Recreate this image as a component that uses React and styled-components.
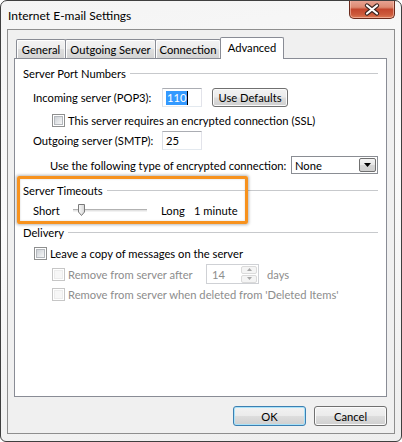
import React from 'react';
import styled, { createGlobalStyle, css } from 'styled-components';

const Global = createGlobalStyle`
  html, body { margin: 0; padding: 0; background: #ffffff; }
  body {
    font-family: Lato, "Liberation Sans", sans-serif;
    font-size: 11.2px;
    color: #000;
  }
  #root { width: 402px; height: 442px; }
  * { box-sizing: border-box; }
`;

const Window = styled.div`
  position: relative;
  width: 402px;
  height: 442px;
  border: 1px solid #3f3f3f;
  border-radius: 7px 7px 6px 6px;
  background: linear-gradient(170deg, #f4f4f4 0%, #fbfbfb 45%, #eeeeee 100%);
  padding: 0 6px 7px 6px;
  display: flex;
  flex-direction: column;
  overflow: hidden;
`;

const TitleBar = styled.div`
  height: 28px;
  display: flex;
  align-items: flex-start;
`;

const Title = styled.div`
  padding: 7px 0 0 1px;
  line-height: 15px;
  font-size: 12px;
  color: #000;
`;

const CloseButton = styled.div`
  margin-left: auto;
  margin-top: -1px;
  width: 46px;
  height: 19px;
  border: 1px solid #6a2a1c;
  border-top: none;
  border-radius: 0 0 5px 5px;
  background: linear-gradient(180deg, #e9a697 0%, #dd8a72 40%, #c4472e 52%, #cc5a3c 80%, #dc7a55 100%);
  box-shadow: inset 0 0 0 1px rgba(255, 210, 195, 0.55);
  display: flex;
  align-items: center;
  justify-content: center;
`;

const Client = styled.div`
  height: 405px;
  border: 1px solid #8e8e8e;
  background: #f0f0f0;
  padding: 7px 7px 7px 6px;
  display: flex;
  flex-direction: column;
`;

const TabStrip = styled.div`
  height: 21px;
  display: flex;
  align-items: flex-end;
  padding-left: 2px;
`;

const Tab = styled.div`
  position: relative;
  width: ${(p) => p.$w}px;
  margin-right: -1px;
  height: 19px;
  border: 1px solid #898c95;
  border-bottom: none;
  border-radius: 2px 2px 0 0;
  background: linear-gradient(180deg, #f3f3f3 0%, #ececec 50%, #dedede 51%, #d4d4d4 100%);
  box-shadow: inset 1px 1px 0 #ffffff, inset -1px 0 0 #f6f6f6;
  display: flex;
  align-items: center;
  justify-content: center;
  line-height: 15px;
  padding-top: 1px;
  ${(p) =>
    p.$active &&
    css`
      height: 22px;
      margin-bottom: -1px;
      z-index: 2;
      background: #ffffff;
      box-shadow: none;
      padding-top: 0;
      padding-bottom: 3px;
    `}
`;

const Panel = styled.div`
  height: 339px;
  border: 1px solid #898c95;
  background: #ffffff;
  display: flex;
  flex-direction: column;
`;

const Row = styled.div`
  display: flex;
  align-items: center;
  height: ${(p) => p.$h}px;
  margin-top: ${(p) => p.$mt}px;
  padding-left: ${(p) => p.$indent || 0}px;
  padding-right: 8px;
  flex-shrink: 0;
`;

const GroupLabel = styled.span`
  line-height: 15px;
  white-space: nowrap;
`;

const GroupLine = styled.div`
  flex: 1;
  height: 1px;
  margin-left: 4px;
  margin-top: 1px;
  background: #c7c9cc;
`;

const Label = styled.span`
  display: inline-block;
  width: ${(p) => (p.$w ? `${p.$w}px` : 'auto')};
  margin-left: ${(p) => p.$ml || 0}px;
  flex-shrink: 0;
  line-height: 15px;
  white-space: nowrap;
  color: ${(p) => (p.$disabled ? '#8d8d8d' : '#000')};
`;

const TextBox = styled.div`
  width: ${(p) => p.$w}px;
  height: 19px;
  border: 1px solid;
  border-color: #abadb3 #e2e3ea #e3e9ef #dbdfe6;
  background: #fff;
  display: flex;
  align-items: center;
  padding-left: 3px;
  line-height: 15px;
  flex-shrink: 0;
`;

const Selected = styled.span`
  background: #3399ff;
  color: #fff;
  line-height: 14px;
  padding: 0 1px 0 1px;
  border-right: 1px solid #000;
`;

const WinButton = styled.div`
  width: ${(p) => p.$w}px;
  height: ${(p) => p.$h}px;
  margin-left: ${(p) => p.$ml || 0}px;
  border: 1px solid ${(p) => (p.$default ? '#3c7fb1' : '#707070')};
  border-radius: 3px;
  background: linear-gradient(180deg, #f2f2f2 0%, #ebebeb 48%, #dddddd 52%, #cfcfcf 100%);
  box-shadow: inset 0 0 0 1px ${(p) => (p.$default ? '#a9e2f9' : '#fbfbfb')};
  display: flex;
  align-items: center;
  justify-content: center;
  line-height: 15px;
  flex-shrink: 0;
`;

const CheckBox = styled.span`
  width: 13px;
  height: 13px;
  flex-shrink: 0;
  border: 1px solid ${(p) => (p.$disabled ? '#c6c6c6' : '#8e8f8f')};
  background: #fff;
  padding: 1px;
  margin-right: 3px;
  display: flex;
  &::after {
    content: '';
    flex: 1;
    border: 1px solid ${(p) => (p.$disabled ? '#ececec' : '#b4b8bd')};
    background: ${(p) =>
      p.$disabled ? '#f7f7f7' : 'linear-gradient(135deg, #cdd1d6 0%, #e6e8ea 60%, #f6f6f6 100%)'};
  }
`;

const Select = styled.div`
  width: 87px;
  height: 18px;
  border: 1px solid #8a8d93;
  background: #fff;
  display: flex;
  align-items: center;
  padding: 0 1px 0 3px;
  line-height: 15px;
  flex-shrink: 0;
`;

const SelectText = styled.span`
  flex: 1;
`;

const DropButton = styled.div`
  width: 17px;
  height: 14px;
  border: 1px solid #707070;
  border-radius: 2px;
  background: linear-gradient(180deg, #f4f4f4 0%, #e7e7e7 50%, #d6d6d6 51%, #cfcfcf 100%);
  display: flex;
  align-items: center;
  justify-content: center;
`;

const Track = styled.div`
  position: relative;
  width: 74px;
  height: 3px;
  border-top: 1px solid #b2b2b2;
  border-bottom: 1px solid #f2f2f2;
  background: #e3e3e3;
  flex-shrink: 0;
`;

const Thumb = styled.svg`
  position: absolute;
  left: 5px;
  top: -6px;
`;

const Spinner = styled.div`
  width: 53px;
  height: 20px;
  border: 1px solid #cfd1d5;
  background: #fff;
  display: flex;
  align-items: center;
  padding: 1px 1px 1px 5px;
  flex-shrink: 0;
`;

const SpinValue = styled.span`
  flex: 1;
  color: #8d8d8d;
  line-height: 15px;
`;

const SpinButtons = styled.div`
  width: 16px;
  height: 17px;
  display: flex;
  flex-direction: column;
  gap: 1px;
`;

const SpinPart = styled.div`
  flex: 1;
  border: 1px solid #dadada;
  border-radius: 2px;
  background: #f4f4f4;
  display: flex;
  align-items: center;
  justify-content: center;
`;

const ButtonRow = styled.div`
  margin-top: 9px;
  display: flex;
  justify-content: flex-end;
`;

const Highlight = styled.div`
  position: absolute;
  left: 16px;
  top: 175px;
  width: 231px;
  height: 48px;
  border: 3px solid #f7921e;
  border-radius: 2px;
  box-shadow: 0 0 3px 1px rgba(0, 0, 0, 0.28), inset 0 0 2px rgba(0, 0, 0, 0.2);
  pointer-events: none;
`;

const Group = ({ label, mt }) => (
  <Row $h={16} $mt={mt} $indent={8}>
    <GroupLabel>{label}</GroupLabel>
    <GroupLine />
  </Row>
);

export default function App() {
  return (
    <>
      <Global />
      <Window>
        <TitleBar>
          <Title>Internet E-mail Settings</Title>
          <CloseButton>
            <svg width="18" height="13" viewBox="0 0 18 13">
              <path d="M4 2.5 L14 10.5 M14 2.5 L4 10.5" stroke="#3a2420" strokeWidth="4.2" strokeLinecap="round" />
              <path d="M4 2.5 L14 10.5 M14 2.5 L4 10.5" stroke="#ffffff" strokeWidth="2.2" strokeLinecap="round" />
            </svg>
          </CloseButton>
        </TitleBar>
        <Client>
          <TabStrip>
            <Tab $w={50}>General</Tab>
            <Tab $w={91}>Outgoing Server</Tab>
            <Tab $w={66}>Connection</Tab>
            <Tab $w={64} $active>Advanced</Tab>
          </TabStrip>
          <Panel>
            <Group label="Server Port Numbers" mt={6} />
            <Row $h={19} $mt={7} $indent={18}>
              <Label $w={129}>Incoming server (POP3):</Label>
              <TextBox $w={40}>
                <Selected>110</Selected>
              </TextBox>
              <WinButton $w={76} $h={19} $ml={10}>Use Defaults</WinButton>
            </Row>
            <Row $h={13} $mt={7} $indent={37}>
              <CheckBox />
              <Label>This server requires an encrypted connection (SSL)</Label>
            </Row>
            <Row $h={19} $mt={4} $indent={18}>
              <Label $w={129}>Outgoing server (SMTP):</Label>
              <TextBox $w={40}>25</TextBox>
            </Row>
            <Row $h={18} $mt={6} $indent={35}>
              <Label $w={241}>Use the following type of encrypted connection:</Label>
              <Select>
                <SelectText>None</SelectText>
                <DropButton>
                  <svg width="7" height="4" viewBox="0 0 7 4">
                    <path d="M0 0 H7 L3.5 4 Z" fill="#000" />
                  </svg>
                </DropButton>
              </Select>
            </Row>
            <Group label="Server Timeouts" mt={8} />
            <Row $h={16} $mt={4} $indent={18}>
              <Label $w={40}>Short</Label>
              <Track>
                <Thumb width="7" height="12" viewBox="0 0 7 12">
                  <defs>
                    <linearGradient id="tg" x1="0" y1="0" x2="1" y2="0">
                      <stop offset="0" stopColor="#fafafa" />
                      <stop offset="1" stopColor="#d6d6d6" />
                    </linearGradient>
                  </defs>
                  <path d="M0.5 0.5 H6.5 V8 L3.5 11.5 L0.5 8 Z" fill="url(#tg)" stroke="#7a7a7a" />
                </Thumb>
              </Track>
              <Label $w={33} $ml={14}>Long</Label>
              <Label>1 minute</Label>
            </Row>
            <Group label="Delivery" mt={6} />
            <Row $h={13} $mt={7} $indent={19}>
              <CheckBox />
              <Label>Leave a copy of messages on the server</Label>
            </Row>
            <Row $h={20} $mt={4} $indent={37}>
              <CheckBox $disabled />
              <Label $w={138} $disabled>Remove from server after</Label>
              <Spinner>
                <SpinValue>14</SpinValue>
                <SpinButtons>
                  <SpinPart>
                    <svg width="5" height="3" viewBox="0 0 5 3">
                      <path d="M0 3 H5 L2.5 0 Z" fill="#a8a8a8" />
                    </svg>
                  </SpinPart>
                  <SpinPart>
                    <svg width="5" height="3" viewBox="0 0 5 3">
                      <path d="M0 0 H5 L2.5 3 Z" fill="#a8a8a8" />
                    </svg>
                  </SpinPart>
                </SpinButtons>
              </Spinner>
              <Label $disabled $ml={8}>days</Label>
            </Row>
            <Row $h={13} $mt={4} $indent={37}>
              <CheckBox $disabled />
              <Label $disabled>Remove from server when deleted from 'Deleted Items'</Label>
            </Row>
          </Panel>
          <ButtonRow>
            <WinButton $w={73} $h={20} $default>OK</WinButton>
            <WinButton $w={73} $h={20} $ml={8}>Cancel</WinButton>
          </ButtonRow>
        </Client>
        <Highlight />
      </Window>
    </>
  );
}
